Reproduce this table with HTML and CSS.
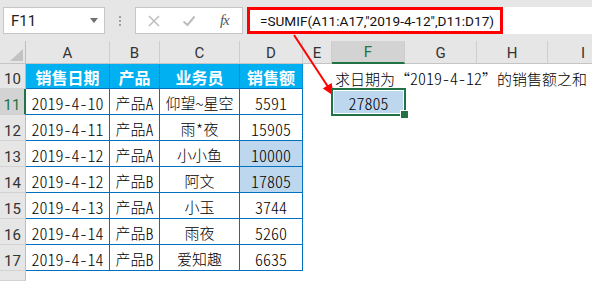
FILE: index.html
```html
<!DOCTYPE html>
<html lang="zh-CN">
<head>
<meta charset="utf-8">
<title>SUMIF</title>
<link rel="stylesheet" href="styles.css">
</head>
<body>
<div class="app">
  <div class="fbar">
    <div class="namebox"><span class="ref">F11</span><svg class="caret" width="8" height="5" viewBox="0 0 8 5"><path d="M0 0H8L4 5Z" fill="#707070"/></svg></div>
    <div class="grip"><i></i><i></i><i></i></div>
    <div class="btns">
      <span class="btn"><svg width="12" height="12" viewBox="0 0 12 12"><path d="M1 1L11 11M11 1L1 11" stroke="#bdbdbd" stroke-width="1.5"/></svg></span>
      <span class="btn"><svg width="14" height="12" viewBox="0 0 14 12"><path d="M1.5 6.5L5.5 10L12.5 1.5" fill="none" stroke="#bdbdbd" stroke-width="2"/></svg></span>
      <span class="btn fx">fx</span>
    </div>
    <div class="input"><span class="formula">=SUMIF(A11:A17,"2019-4-12",D11:D17)</span></div>
  </div>

  <div class="viewport">
    <div class="sheet">
      <div class="ch corner"><svg width="13" height="12" viewBox="0 0 13 12"><path d="M13 0V12H0Z" fill="#c2c2c2"/></svg></div>
      <div class="ch">A</div><div class="ch">B</div><div class="ch">C</div><div class="ch">D</div>
      <div class="ch">E</div><div class="ch active">F</div><div class="ch">G</div><div class="ch">H</div><div class="ch">I</div>

      <div class="rh">10</div>
      <div class="th">销售日期</div><div class="th">产品</div><div class="th">业务员</div><div class="th">销售额</div>
      <div class="e"></div>
      <div class="e note">求日期为“<span class="m">2019-4-12</span>”的销售额之和</div>

      <div class="rh active">11</div>
      <div class="td"><span class="m">2019-4-10</span></div><div class="td">产品<span class="m">A</span></div><div class="td">仰望<span class="m">~</span>星空</div><div class="td"><span class="m">5591</span></div>
      <div class="e"></div>
      <div class="e sel"><span class="m">27805</span></div>
      <div class="e rest2"></div>

      <div class="rh">12</div>
      <div class="td"><span class="m">2019-4-11</span></div><div class="td">产品<span class="m">A</span></div><div class="td">雨<span class="m">*</span>夜</div><div class="td"><span class="m">15905</span></div>
      <div class="e rest"></div>

      <div class="rh">13</div>
      <div class="td"><span class="m">2019-4-12</span></div><div class="td">产品<span class="m">A</span></div><div class="td">小小鱼</div><div class="td hl"><span class="m">10000</span></div>
      <div class="e rest"></div>

      <div class="rh">14</div>
      <div class="td"><span class="m">2019-4-12</span></div><div class="td">产品<span class="m">B</span></div><div class="td">阿文</div><div class="td hl"><span class="m">17805</span></div>
      <div class="e rest"></div>

      <div class="rh">15</div>
      <div class="td"><span class="m">2019-4-13</span></div><div class="td">产品<span class="m">A</span></div><div class="td">小玉</div><div class="td"><span class="m">3744</span></div>
      <div class="e rest"></div>

      <div class="rh">16</div>
      <div class="td"><span class="m">2019-4-14</span></div><div class="td">产品<span class="m">B</span></div><div class="td">雨夜</div><div class="td"><span class="m">5260</span></div>
      <div class="e rest"></div>

      <div class="rh">17</div>
      <div class="td"><span class="m">2019-4-14</span></div><div class="td">产品<span class="m">B</span></div><div class="td">爱知趣</div><div class="td"><span class="m">6635</span></div>
      <div class="e rest"></div>

      <div class="rh"></div>
      <div class="e all"></div>
    </div>
  </div>

  <svg class="arrow" width="592" height="281" viewBox="0 0 592 281">
    <line x1="294" y1="35" x2="327.5" y2="86" stroke="#ff0000" stroke-width="2"/>
    <path d="M334 96L322.8 88.6L331.6 82.9Z" fill="#ff0000"/>
  </svg>
</div>
</body>
</html>
```

FILE: styles.css
```css
* { box-sizing: border-box; }
html, body { margin: 0; padding: 0; background: #fff; }
.app {
  position: relative;
  width: 592px;
  height: 281px;
  overflow: hidden;
  font-family: "Noto Sans CJK SC", sans-serif;
}

/* formula bar */
.fbar {
  height: 41px;
  background: #e6e6e6;
  display: flex;
  align-items: center;
  padding-left: 3px;
}
.namebox {
  width: 102px;
  height: 27px;
  background: #fff;
  border: 1px solid #c6c6c6;
  display: flex;
  align-items: center;
  justify-content: space-between;
  padding: 0 6px 0 7px;
}
.ref { font: 15px Roboto, sans-serif; color: #222; }
.grip {
  width: 30px;
  height: 27px;
  display: flex;
  flex-direction: column;
  align-items: center;
  justify-content: center;
  gap: 2px;
}
.grip i { display: block; width: 2px; height: 2px; background: #a0a0a0; }
.btns {
  width: 108px;
  height: 27px;
  background: #fff;
  border: 1px solid #c6c6c6;
  display: flex;
}
.btn {
  width: 36px;
  display: flex;
  align-items: center;
  justify-content: center;
}
.fx {
  font: italic 15px "Liberation Serif", serif;
  color: #555;
  letter-spacing: -1px;
}
.input {
  flex: 1;
  height: 27px;
  margin-left: 4px;
  background: #fff;
  display: flex;
}
.formula {
  height: 27px;
  display: flex;
  align-items: center;
  border: 3px solid #ff0000;
  padding: 0 6px 0 10px;
  font: 13.6px Roboto, sans-serif;
  color: #111;
  white-space: nowrap;
}

/* sheet */
.viewport { width: 592px; height: 240px; overflow: hidden; }
.sheet {
  width: 619px;
  display: grid;
  grid-template-columns: 26px 84px 50px 80px 63px 29px 73px 72px 71px 71px;
  grid-template-rows: 23px 25px repeat(7, 26px) 10px;
}
.ch {
  background: #e6e6e6;
  border-right: 1px solid #cdcdcd;
  border-bottom: 1px solid #c4c4c4;
  display: flex;
  align-items: center;
  justify-content: center;
  font: 15px Roboto, sans-serif;
  color: #333;
  padding-top: 1px;
}
.ch.corner {
  align-items: flex-end;
  justify-content: flex-end;
  padding: 0 2px 2px 0;
  border-right-color: #bdbdbd;
}
.ch.active {
  background: #d3d3d3;
  color: #217346;
  border-bottom: 2px solid #217346;
}
.rh {
  background: #e6e6e6;
  border-right: 1px solid #bdbdbd;
  border-bottom: 1px solid #d2d2d2;
  display: flex;
  align-items: flex-end;
  justify-content: center;
  font: 15px Roboto, sans-serif;
  line-height: 16px;
  color: #333;
  padding-bottom: 1px;
}
.rh.active {
  background: #d3d3d3;
  color: #217346;
  border-right: 2px solid #217346;
}
.th {
  background: #00b0f0;
  color: #fff;
  font-weight: bold;
  font-size: 16px;
  border-right: 1px solid #0a8fd6;
  border-bottom: 1px solid #0070c0;
  display: flex;
  align-items: center;
  justify-content: center;
  padding-top: 1px;
}
.td {
  background: #fff;
  color: #000;
  font-size: 15px;
  font-weight: 300;
  border-right: 1px solid #0070c0;
  border-bottom: 1px solid #0070c0;
  display: flex;
  align-items: center;
  justify-content: center;
  padding-top: 2px;
  white-space: nowrap;
}
.td.hl { background: #bdd7ee; }
.m {
  font-family: "Noto Sans CJK SC", sans-serif;
  font-feature-settings: "hwid" 1;
  font-size: 16px;
  font-weight: 300;
}
.e { background: #fff; }
.rest { grid-column: 6 / -1; }
.rest2 { grid-column: 8 / -1; }
.all { grid-column: 2 / -1; }
.note {
  grid-column: 7 / -1;
  display: flex;
  align-items: center;
  padding: 3px 0 0 3px;
  font-size: 15px;
  font-weight: 300;
  color: #000;
  white-space: nowrap;
}
.sel {
  position: relative;
  z-index: 2;
  background: #bdd7ee;
  outline: 2px solid #217346;
  outline-offset: -1px;
  box-shadow: inset 0 0 0 2px #fff;
  display: flex;
  align-items: center;
  justify-content: center;
  padding-top: 2px;
  color: #000;
}
.sel::after {
  content: "";
  position: absolute;
  right: -4px;
  bottom: -4px;
  width: 7px;
  height: 7px;
  background: #217346;
  border: 1px solid #fff;
}

.arrow { position: absolute; left: 0; top: 0; pointer-events: none; }
```
